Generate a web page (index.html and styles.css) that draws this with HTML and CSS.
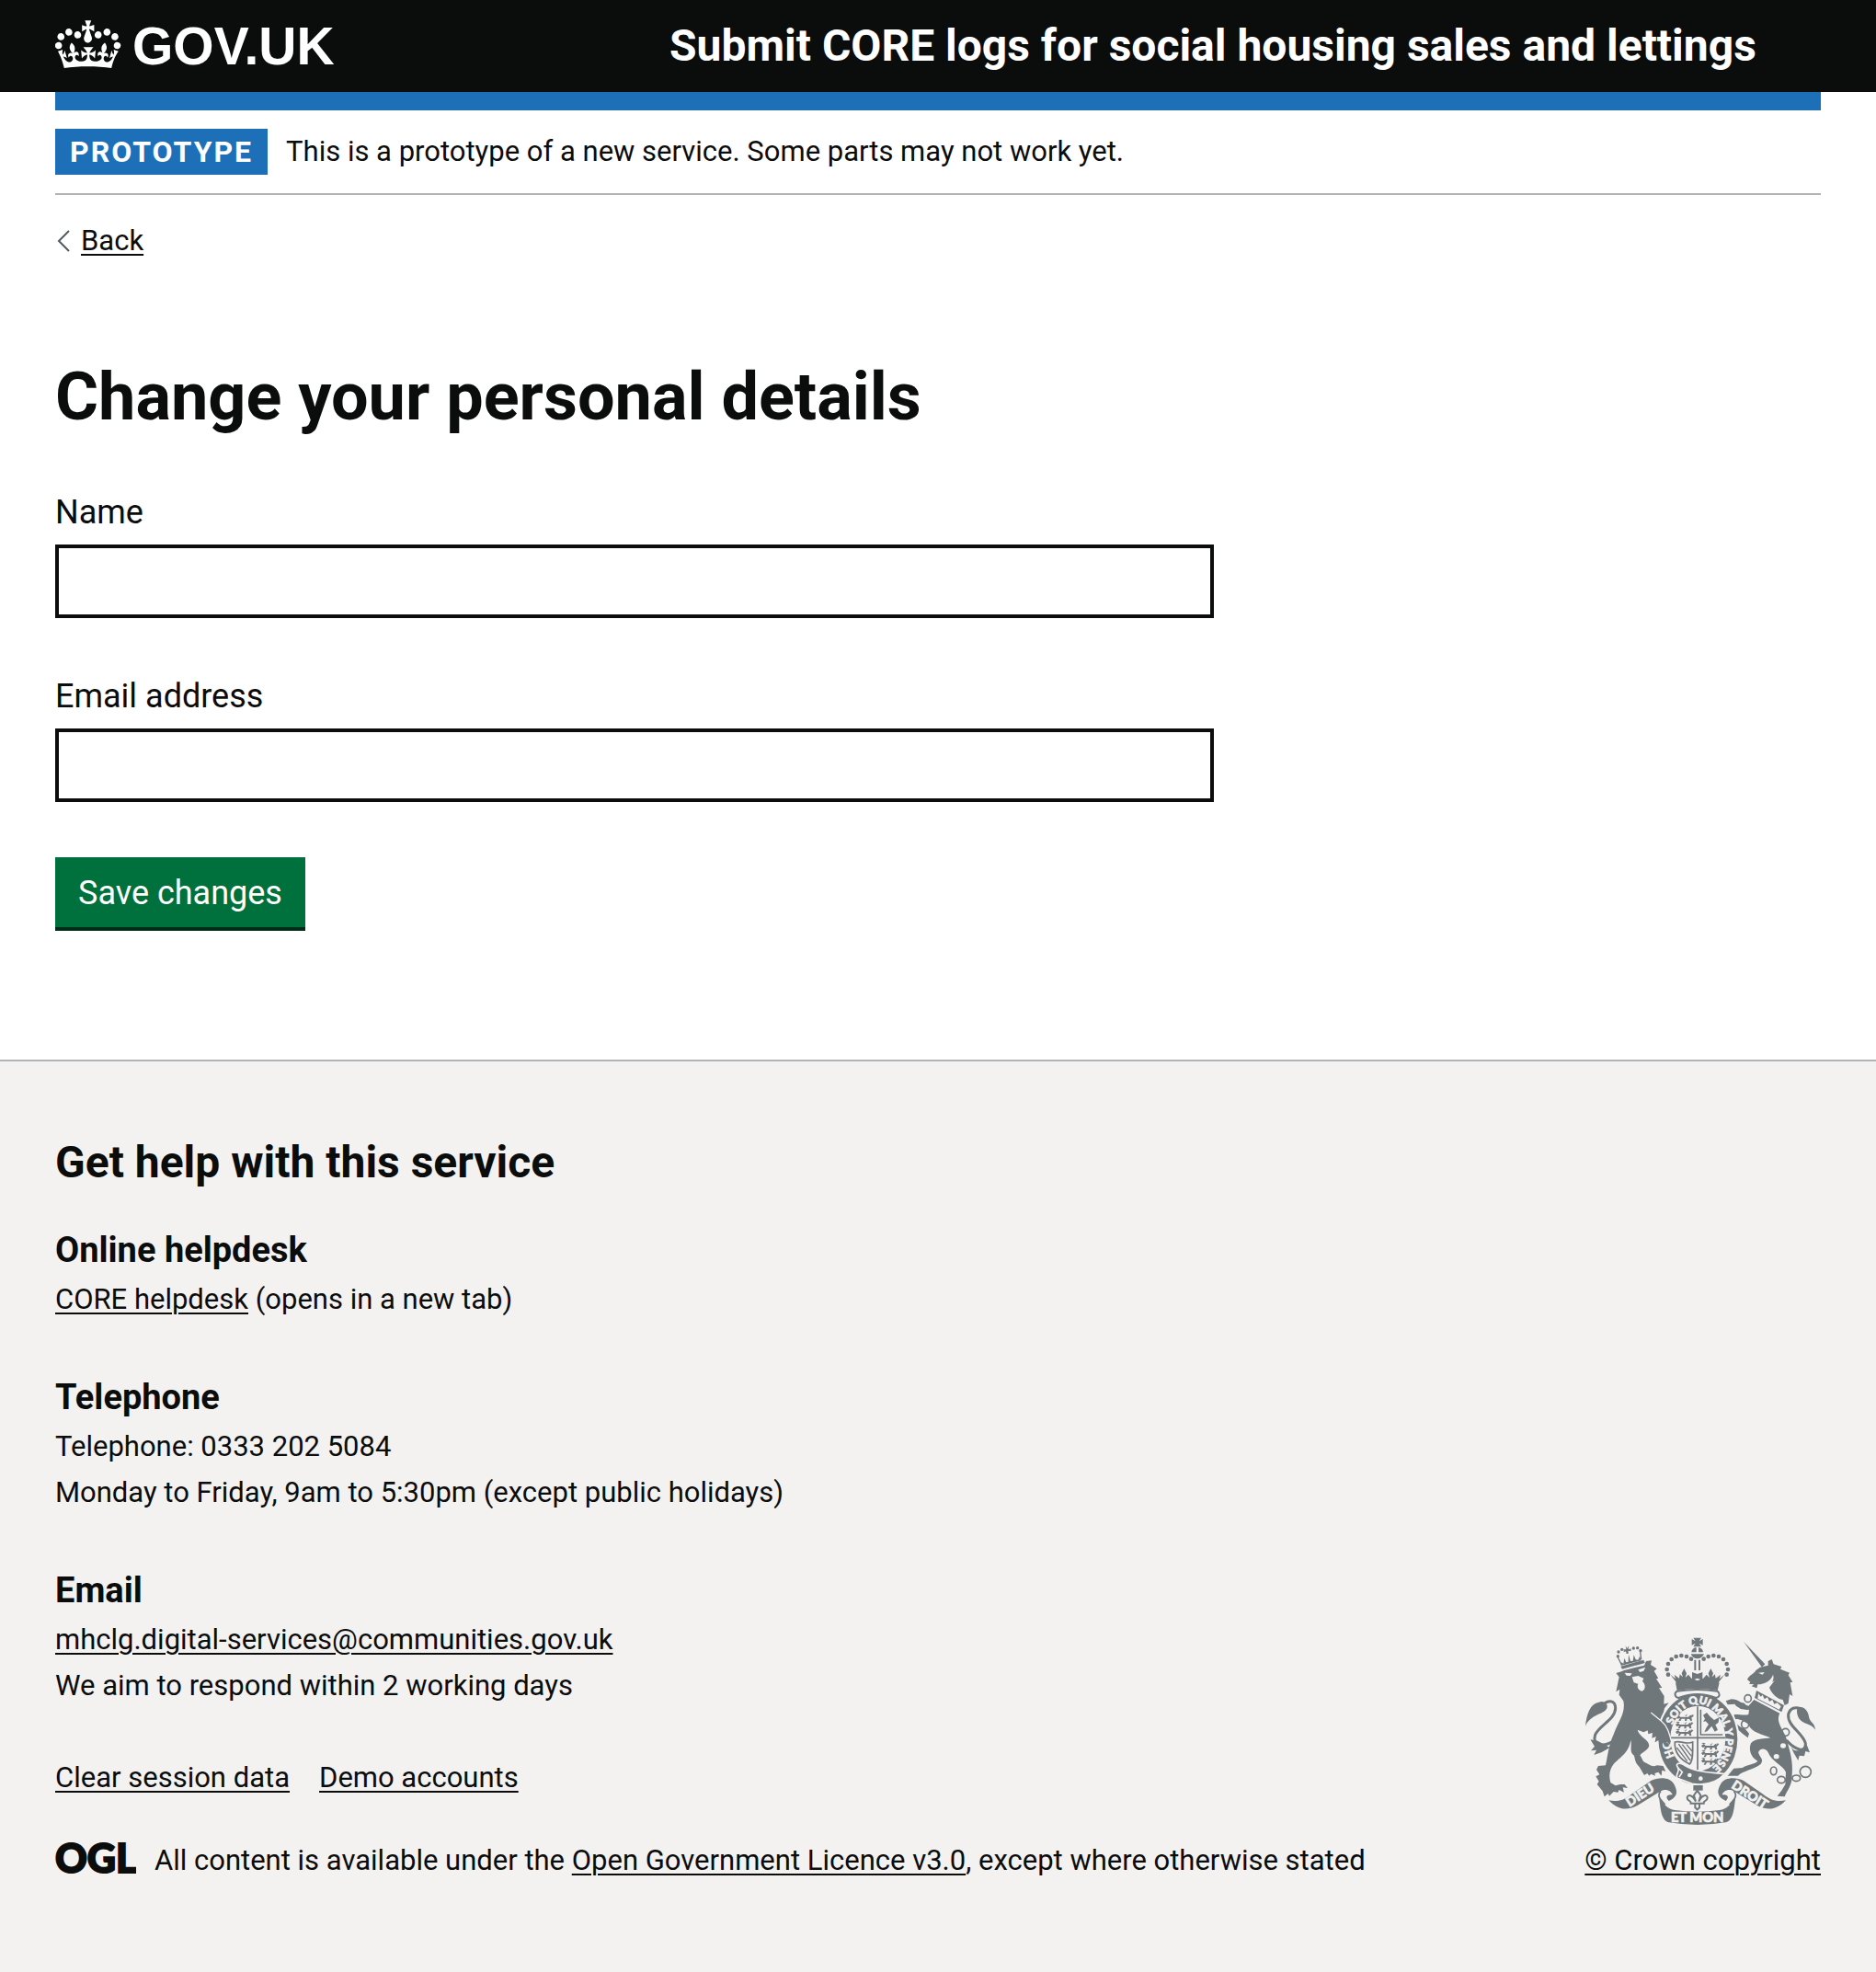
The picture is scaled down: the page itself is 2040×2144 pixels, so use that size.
FILE: index.html
```html
<!DOCTYPE html>
<html lang="en">
<head>
<meta charset="utf-8">
<meta name="viewport" content="width=device-width, initial-scale=1">
<title>Change your personal details - Submit CORE logs</title>
<link rel="stylesheet" href="styles.css">
</head>
<body>
<header class="header">
  <div class="container header-row">
    <div class="header-logo">
      <a class="header-home" href="#">
        <svg class="crown" viewBox="0 2 36 32" width="72" height="64" fill="currentColor" aria-hidden="true"><path d="M6.7 12.2c1 .4 2.1-.1 2.5-1s-.1-2.1-1-2.5c-1-.4-2.1.1-2.5 1-.4 1 0 2.1 1 2.5m-4.3 2.5c1 .4 2.1-.1 2.5-1s-.1-2.1-1-2.5c-1-.4-2.1.1-2.5 1-.5 1 0 2.1 1 2.5m-1.3 4.8c1 .4 2.1-.1 2.5-1 .4-1-.1-2.1-1-2.5-1-.4-2.1.1-2.5 1-.4 1 0 2.1 1 2.5m10.4-5.8c1 .4 2.1-.1 2.5-1s-.1-2.1-1-2.5c-1-.4-2.1.1-2.5 1s0 2.1 1 2.5m17.4-1.5c-1 .4-2.1-.1-2.5-1s.1-2.1 1-2.5c1-.4 2.1.1 2.5 1 .5 1 0 2.1-1 2.5m4.3 2.5c-1 .4-2.1-.1-2.5-1s.1-2.1 1-2.5c1-.4 2.1.1 2.5 1 .5 1 0 2.1-1 2.5m1.3 4.8c-1 .4-2.1-.1-2.5-1-.4-1 .1-2.1 1-2.5 1-.4 2.1.1 2.5 1 .4 1 0 2.1-1 2.5m-10.4-5.8c-1 .4-2.1-.1-2.5-1s.1-2.1 1-2.5c1-.4 2.1.1 2.5 1s0 2.1-1 2.5m-5.3-4.9 2.4 1.3V6.5l-2.4.8c-.1-.1-.1-.2-.2-.2s1-3 1-3h-3.4l1 3c-.1.1-.2.1-.2.2-.1.1-2.4-.7-2.4-.7v3.5L17 8.8c-.1.1 0 .2.1.3l-1.4 4.2c-.1.2-.1.4-.1.7 0 1.1.8 2.1 1.9 2.2h.6C19.2 16 20 15.1 20 14c0-.2 0-.4-.1-.7l-1.4-4.2c.2-.1.3-.2.3-.3m-1 20.3c4.6 0 8.9.3 12.8.9 1.1-4.6 2.4-7.2 3.8-9.1l-2.6-.9c.3 1.3.3 1.9 0 2.8-.4-.4-.8-1.2-1.1-2.4l-1.2 4.2c.8-.5 1.3-.9 2-.9-1.2 2.6-2.7 3.2-3.6 3-1.2-.2-1.7-1.3-1.5-2.2.3-1.3 1.6-1.5 2.1-.1 1.1-2.4-.8-3.1-2.1-2.4 1.9-1.9 2.2-3.6.6-5.7-2.2 1.7-2.2 3.3-1.2 5.6-1.3-1.5-3.3-.7-2.5 1.7.9-1.4 2.1-.5 2 .8-.2 1.2-1.7 2.1-3.7 2-2.8-.2-3-2.2-3-3.7.7-.1 1.9.5 3 2l.4-4.4c-1.1 1.2-2.2 1.4-3.3 1.4.4-1.2 2.1-3.1 2.1-3.1h-5.5s1.8 2 2.1 3.1c-1.1 0-2.2-.3-3.3-1.4l.4 4.4c1.1-1.5 2.3-2.1 3-2-.1 1.6-.2 3.5-3 3.7-1.9.2-3.5-.8-3.7-2-.2-1.3 1-2.2 1.9-.8.7-2.4-1.3-3.1-2.6-1.7 1-2.3.9-4-1.2-5.6-1.6 2.1-1.3 3.8.6 5.7-1.3-.7-3.2 0-2.1 2.4.6-1.5 1.9-1.1 2.2.1.2.9-.4 1.9-1.5 2.2-1 .2-2.5-.5-3.7-3 .7 0 1.3.4 2 .9l-1.2-4.2c-.3 1.2-.7 2-1.1 2.4-.3-.8-.2-1.5 0-2.8l-2.6.9C2.5 22.8 3.8 25.4 4.9 30c3.9-.6 8.3-.9 12.9-.9"/></svg>
        <span class="header-name">GOV.UK</span>
      </a>
    </div>
    <a class="header-service" href="#">Submit CORE logs for social housing sales and lettings</a>
  </div>
</header>

<div class="container">
  <div class="phase">
    <strong class="tag">PROTOTYPE</strong>
    <span>This is a prototype of a new service. Some parts may not work yet.</span>
  </div>
  <a class="back" href="#">
    <svg width="18" height="24" viewBox="0 0 18 24" fill="none" stroke="#505a5f" stroke-width="2" aria-hidden="true"><path d="M15 1 4 12l11 11"/></svg>
    <span class="back-text">Back</span>
  </a>
  <main class="main">
    <h1>Change your personal details</h1>
    <form class="form">
      <div class="field">
        <label for="name">Name</label>
        <input id="name" name="name" type="text">
      </div>
      <div class="field">
        <label for="email">Email address</label>
        <input id="email" name="email" type="email">
      </div>
      <button class="button" type="button">Save changes</button>
    </form>
  </main>
</div>

<footer class="footer">
  <div class="container footer-row">
    <div class="footer-main">
      <h2>Get help with this service</h2>
      <section class="help">
        <h3>Online helpdesk</h3>
        <p><a href="#">CORE helpdesk</a> (opens in a new tab)</p>
      </section>
      <section class="help">
        <h3>Telephone</h3>
        <p>Telephone: 0333 202 5084</p>
        <p>Monday to Friday, 9am to 5:30pm (except public holidays)</p>
      </section>
      <section class="help">
        <h3>Email</h3>
        <p><a href="#">mhclg.digital-services@communities.gov.uk</a></p>
        <p>We aim to respond within 2 working days</p>
      </section>
      <ul class="links">
        <li><a href="#">Clear session data</a></li>
        <li><a href="#">Demo accounts</a></li>
      </ul>
      <div class="licence">
        <svg class="ogl" width="88" height="50" viewBox="0 0 88 50" aria-hidden="true"><text x="0" y="38">OGL</text></svg>
        <p>All content is available under the <a href="#">Open Government Licence v3.0</a>, except where otherwise stated</p>
      </div>
    </div>
    <div class="copyright">
      <svg class="crest" viewBox="72 60 750 612" width="250" height="204" aria-hidden="true">
        <defs>
          <path id="garter" d="M439 505A99 115 0 0 1 439 276A99 115 0 0 1 439 505"/>
          <g id="arch">
            <circle cx="417" cy="131" r="7"/><circle cx="402" cy="123" r="7"/><circle cx="385" cy="120" r="7"/><circle cx="368" cy="123" r="7"/><circle cx="353" cy="132" r="7"/><circle cx="342" cy="147" r="7"/><circle cx="338" cy="165" r="7"/><circle cx="342" cy="182" r="7"/>
            <path d="M350 182 366 196 362 182 378 194 380 181 390 190 386 178 394 162 402 178 398 192 408 182 418 194 438 202V214H372C368 204 360 198 350 182z"/>
          </g>
          <path id="passant" d="M0 8 8 2 14 8H40L46 2 52 4 50 0 58 2 54 8 50 10 52 20 46 21 44 15 36 14 34 21 28 21 29 14 18 14 14 21 8 21 12 12 4 14zM0 0 6-2 14 0 10 3zM24-2 30 4 38-2 32 7z"/>
        </defs>

        <!-- lion -->
        <path d="M187 155 262 134 266 144 192 164z"/>
        <g fill="none" stroke="currentColor" stroke-width="4"><path d="M190 150 178 126M254 132 250 100"/></g>
        <path d="M188 153 189 142 196 146 199 128 205 142 212 140 213 116 219 138 227 137 230 118 236 133 244 134 249 122 254 136z"/>
        <circle cx="178" cy="122" r="5"/><circle cx="180" cy="108" r="5"/><circle cx="191" cy="100" r="5"/><circle cx="252" cy="104" r="5"/><circle cx="242" cy="95" r="5"/><circle cx="229" cy="96" r="5"/><path d="M203 88 208 97 214 88 212 100 221 97 220 106 212 104 212 114H206L204 106 197 109 197 100 205 100z"/>
        <path d="M172 177 190 172 198 168 264 152 270 138 288 136 285 150 305 163 296 170 310 194 303 196 322 225 312 226 329 252 328 278 344 274 330 292 322 326 342 352 350 388 346 410 336 404 332 418 322 402 312 414 311 396 299 402 303 384 289 389 291 372 277 376 275 364 262 370 242 362C246 384 280 394 280 414C276 430 252 438 250 446C258 452 256 466 270 470C284 478 294 484 306 478L326 480 334 498 322 494 320 512 310 500 298 504 300 512 286 506 280 512 274 504 264 510C256 498 252 486 242 476C230 462 236 448 226 442C216 430 224 410 220 396C212 440 186 450 164 474C150 492 148 514 154 534L170 544 186 540 200 540 210 552 194 550 198 566 182 558 178 566 164 564 150 578 146 570 134 580 128 562 110 540 116 530 106 514 118 508 108 492 114 480 138 478C146 440 148 410 166 372C180 334 204 308 196 268L182 248 184 230 172 238 182 190z"/>
        <path fill="#f3f2f1" d="M200 176 224 178 218 186 206 185zM244 166 268 158 262 170 250 174zM224 190 244 186 262 194 258 204C270 214 268 234 256 236C242 232 240 222 244 212L230 208z"/>
        <path fill="none" stroke="currentColor" stroke-width="9" d="M164 398C126 422 94 410 104 378C118 346 168 330 170 292C170 268 152 264 134 276"/>
        <path d="M72 350C76 310 88 276 116 272 136 264 152 284 138 298 126 312 88 314 72 350zM112 398 88 394 102 416 90 430 108 428 100 444 124 436 152 420z"/>

        <!-- unicorn -->
        <path d="M588 74 658 148 648 158z"/>
        <path d="M668 152 668 138 680 132 686 148 712 156 708 164 738 176 734 184 748 206 740 208 748 252 738 246 734 276 722 282 716 264C696 260 680 244 672 224L690 200C682 206 670 214 650 212L630 226 614 220 622 214 606 212 610 206 600 198C606 184 622 180 628 168L642 158z"/>
        <path fill="#f3f2f1" d="M636 176 656 174 650 182zM634 214C660 214 678 200 684 182 692 204 668 226 646 232L630 232z"/>
        <path d="M630 234 720 282 712 304 624 258z"/>
        <path fill="#f3f2f1" d="M636 243 644 254 650 248 656 262 666 256 672 270 682 264 688 278 698 274 710 286 704 296 634 260z"/>
        <path d="M622 264 706 308C690 340 724 366 730 398C738 430 750 460 746 510C748 540 730 560 722 580L698 578 712 560 724 540 726 500C714 476 680 466 668 436C660 420 640 422 636 436C640 452 656 458 644 474C622 492 584 496 570 512L536 512 556 488 584 486C600 474 628 474 634 464C610 452 604 424 612 406C624 390 656 392 676 388C650 376 614 372 604 344 584 328 556 320 556 334L576 352 594 360 606 374 602 388 584 374 566 358C554 344 544 330 544 322L560 312C578 312 592 316 604 312L606 296C590 300 560 286 560 278L536 280 530 268 548 262C570 262 584 278 604 284z"/>
        <g fill="#f3f2f1"><ellipse cx="717" cy="414" rx="9" ry="8"/><ellipse cx="695" cy="449" rx="9" ry="8"/></g>
        <g fill="none" stroke="currentColor" stroke-width="5"><ellipse cx="602" cy="260" rx="11" ry="12"/><ellipse cx="584" cy="284" rx="8" ry="8"/><ellipse cx="593" cy="344" rx="12" ry="13"/><ellipse cx="725" cy="370" rx="12" ry="12"/><ellipse cx="686" cy="496" rx="10" ry="13"/><ellipse cx="711" cy="525" rx="13" ry="11"/><ellipse cx="760" cy="520" rx="13" ry="10"/><circle cx="790" cy="499" r="18"/></g>
        <path fill="none" stroke="currentColor" stroke-width="9" d="M728 396C756 428 792 440 790 406C782 372 730 350 734 312C740 290 756 286 776 294"/>
        <path d="M764 290C786 282 800 302 802 324 808 340 820 340 822 362 808 340 782 346 768 324 762 312 760 300 764 290zM742 416C760 446 784 420 794 410L804 436 790 432 786 448 770 446 766 462 752 438z"/>

        <!-- garter and shield -->
        <ellipse cx="439" cy="391" rx="135" ry="154" fill="#f3f2f1"/>
        <path fill-rule="evenodd" d="M439 243A129 149 0 0 1 439 541A129 149 0 0 1 439 243zM439 284A90 106 0 0 0 439 496A90 106 0 0 0 439 284z"/>
        <path fill="none" stroke="currentColor" stroke-width="5" d="M438 286V494M350 388H528M448 296V378H520"/>
        <use href="#passant" x="368" y="312"/><use href="#passant" x="366" y="337"/><use href="#passant" x="366" y="361"/>
        <use href="#passant" x="450" y="406"/><use href="#passant" x="450" y="430"/><use href="#passant" x="450" y="455"/>
        <path d="M456 314 468 306 478 318 492 330 508 322 506 338 496 346 504 362 494 368 484 350 470 366 460 370 466 356 474 344 464 334 456 336 462 326z"/>
        <g fill="none" stroke="currentColor" stroke-width="5"><path d="M364 402C362 430 376 456 412 474C424 462 422 430 422 402C400 412 384 396 364 402z"/><path stroke-width="4" d="M376 408 414 462M388 410 418 448M402 410 420 432M370 420 404 464"/></g>
        <text class="motto" font-size="35"><textPath href="#garter" startOffset="98">HO<tspan dx="50">SOIT QUI MAL Y PENSE</tspan></textPath></text>
        <path stroke="#f3f2f1" stroke-width="5" d="M372 482C366 474 376 466 392 476C430 502 480 500 526 506C500 536 460 544 420 538L372 520C362 508 384 500 372 482z"/>
        <circle cx="412" cy="510" r="7" fill="#f3f2f1"/><circle cx="448" cy="521" r="7" fill="#f3f2f1"/>
        <path fill="none" stroke="#f3f2f1" stroke-width="5" d="M374 486 388 500 378 516"/>

        <!-- lion's foreleg, over the garter -->
        <path d="M286 310 318 334C340 352 344 376 350 396L348 410 338 402 332 418 324 402 314 414 311 396 299 402 303 384 270 350z"/>
        <path fill="none" stroke="#f3f2f1" stroke-width="4" d="M286 306 320 334C340 350 346 376 352 398"/>

        <!-- main crown -->
        <path fill="#f3f2f1" d="M366 222H509L512 246 437 240 362 246z"/>
        <use href="#arch"/><use href="#arch" transform="matrix(-1 0 0 1 875 0)"/>
        <path d="M366 208H509L503 234Q437 222 371 234zM424 62H450L443 73 455 66V86L443 80 450 91H424L431 80 419 86V66L431 73zM418 109A19 18 0 0 1 434 93V109zM441 93A19 18 0 0 1 456 109H441zM416 115H459Q452 130 437 130 422 130 416 115zM427 134H433V168H427zM441 134H447V168H441zM420 174 437 180 454 174V200L437 194 420 200z"/>
        <path fill="#f3f2f1" stroke="currentColor" stroke-width="6" d="M371 236C360 244 364 256 376 258Q437 234 498 258C512 254 512 244 503 236Q437 226 371 236z"/>

        <!-- motto scroll -->
        <path d="M424 543H455V560H424z"/>
        <path fill="none" stroke="currentColor" stroke-width="6" d="M437 560 448 576 442 596C452 572 470 572 470 584 470 596 456 592 458 602H416C418 592 404 596 404 584 404 572 422 572 432 596L426 576zM430 604V616L437 622 444 616V604"/>
        <path d="M148 592C180 598 200 590 222 572L286 528C314 514 350 518 360 538 374 562 374 580 344 594 330 580 340 572 356 574 352 562 336 552 318 562L240 610C206 626 178 624 148 592z"/>
        <path fill="none" stroke="currentColor" stroke-width="5" d="M318 562C304 576 316 590 332 606"/>
        <path d="M726 592C694 598 674 590 652 572L588 528C560 514 524 518 514 538 500 562 500 580 530 594 544 580 534 572 518 574 522 562 538 552 556 562L634 610C668 626 696 624 726 592z"/>
        <path fill="none" stroke="currentColor" stroke-width="5" d="M556 562C570 576 558 590 542 606"/>
        <path d="M312 582C326 604 342 622 364 624Q437 634 510 624C532 622 548 604 562 582 556 620 556 656 530 664Q437 680 344 664C318 656 318 620 312 582z"/>
        <text class="motto" font-size="44" x="437" y="664" text-anchor="middle">ET MON</text>
        <text class="motto" font-size="42" transform="translate(216 614) rotate(-33)">DIEU</text>
        <text class="motto" font-size="42" transform="translate(546 550) rotate(33)">DROIT</text>
      </svg>
      <a class="copyright-link" href="#">© Crown copyright</a>
    </div>
  </div>
</footer>
</body>
</html>
```
FILE: styles.css
```css
*, *::before, *::after {
  box-sizing: border-box;
}

html {
  background: #f3f2f1;
}

body {
  margin: 0;
  background: #fff;
  color: #0b0c0c;
  font-family: Roboto, "Liberation Sans", sans-serif;
  font-size: 31px;
  line-height: 50px;
}

h1, h2, h3, p, ul {
  margin: 0;
  padding: 0;
}

a {
  color: inherit;
  text-decoration-thickness: 2px;
  text-underline-offset: 4px;
}

.container {
  margin: 0 60px;
}

/* Header */
.header {
  background: linear-gradient(#0b0c0c, #0b0c0c) top / 100% calc(100% - 20px) no-repeat #fff;
  color: #fff;
}

.header-row {
  display: flex;
  align-items: center;
  min-height: 120px;
  border-bottom: 20px solid #1d70b8;
}

.header-logo {
  flex: none;
  width: calc(33.333% + 28px);
}

.header-home {
  display: flex;
  align-items: center;
  gap: 12px;
  text-decoration: none;
}

.crown {
  flex: none;
}

.header-name {
  font-family: "Liberation Sans", sans-serif;
  font-size: 57px;
  font-weight: 700;
  line-height: 60px;
}

.header-service {
  font-size: 48px;
  font-weight: 700;
  line-height: 60px;
  text-decoration: none;
}

/* Phase banner */
.phase {
  display: flex;
  align-items: center;
  gap: 20px;
  padding: 20px 0;
  border-bottom: 2px solid #b1b4b6;
}

.tag {
  padding: 0 16px;
  background: #1d70b8;
  color: #fff;
  font-size: 32px;
  letter-spacing: 2px;
}

.back {
  display: inline-flex;
  align-items: center;
  gap: 10px;
  margin: 30px 0;
  line-height: 40px;
  text-decoration: none;
}

.back-text {
  text-decoration: underline 2px;
  text-underline-offset: 4px;
}

/* Form */
.main {
  padding: 80px 0 140px;
}

h1 {
  margin-bottom: 60px;
  font-size: 72px;
  line-height: 80px;
}

.form {
  display: flex;
  flex-direction: column;
  align-items: flex-start;
  gap: 60px;
  width: calc(66.667% - 20px);
}

.field {
  display: flex;
  flex-direction: column;
  gap: 10px;
  width: 100%;
}

label {
  font-size: 36px;
}

input {
  width: 100%;
  height: 80px;
  padding: 10px;
  border: 4px solid #0b0c0c;
  border-radius: 0;
  background: #fff;
  font: inherit;
}

.button {
  margin: 0;
  padding: 14px 25px 12px;
  border: 0;
  border-bottom: 4px solid #002d18;
  background: #00703c;
  color: #fff;
  font-family: inherit;
  font-size: 36px;
  line-height: 50px;
}

/* Footer */
.footer {
  padding: 80px 0 96px;
  border-top: 2px solid #b1b4b6;
  background: #f3f2f1;
}

.footer-row {
  display: flex;
  align-items: flex-end;
  justify-content: space-between;
}

h2 {
  margin-bottom: 40px;
  font-size: 48px;
  line-height: 60px;
}

h3 {
  margin-bottom: 4px;
  font-size: 38px;
}

.help + .help {
  margin-top: 56px;
}

.links {
  display: flex;
  gap: 32px;
  margin: 50px 0 40px;
  list-style: none;
}

.licence {
  display: flex;
  align-items: center;
  gap: 20px;
}

.ogl {
  flex: none;
  fill: #0b0c0c;
  stroke: #0b0c0c;
  stroke-width: 2px;
  font-family: Lato, sans-serif;
  font-size: 43px;
  font-weight: 900;
}

.copyright {
  display: flex;
  flex-direction: column;
  align-items: center;
  gap: 14px;
  width: 262px;
}

.copyright-link {
  align-self: flex-end;
}

.crest {
  color: #6f777b;
  fill: currentColor;
}

.crest .motto {
  fill: #f3f2f1;
  stroke: #f3f2f1;
  stroke-width: 2px;
  font-family: Lato, sans-serif;
  font-weight: 900;
}
```
